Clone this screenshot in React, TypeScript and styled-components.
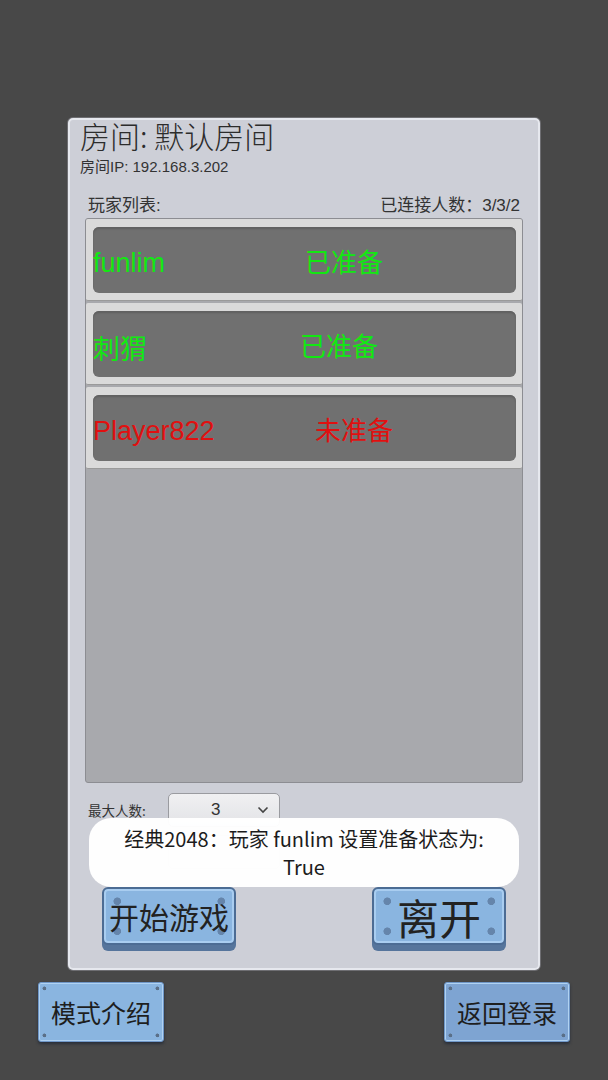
import React from "react";
import styled, { createGlobalStyle } from "styled-components";

const Global = createGlobalStyle`
  html, body { margin: 0; padding: 0; background: #484848; }
  body { font-family: "Noto Sans CJK SC", "Noto Sans", sans-serif; }
`;

const Page = styled.div`
  width: 608px;
  height: 1080px;
  background: #484848;
  display: flex;
  flex-direction: column;
  padding-top: 118px;
  box-sizing: border-box;
`;

const Panel = styled.div`
  position: relative;
  margin-left: 68px;
  width: 472px;
  height: 852px;
  box-sizing: border-box;
  background: #cdcfd7;
  border: 2px solid #e6e8ee;
  border-radius: 5px;
  box-shadow: 0 0 0 1px #6e6e72;
  padding: 0 0 0 10px;
  display: flex;
  flex-direction: column;
`;

const Title = styled.div`
  font-size: 30px;
  line-height: 36px;
  margin-top: -3px;
  color: #2c2c2c;
  font-weight: 300;
`;

const IpLine = styled.div`
  font-size: 15px;
  line-height: 18px;
  color: #333;
  margin-top: 5px;
  font-family: "Liberation Sans", "Noto Sans CJK SC", sans-serif;
`;

const HeaderRow = styled.div`
  display: flex;
  justify-content: space-between;
  width: 440px;
  margin-top: 19px;
  padding-left: 8px;
  box-sizing: border-box;
  font-size: 17px;
  line-height: 22px;
  color: #333;
  font-family: "Liberation Sans", "Noto Sans CJK SC", sans-serif;
`;

const List = styled.div`
  margin-top: 1px;
  margin-left: 5px;
  width: 438px;
  height: 565px;
  box-sizing: border-box;
  background: #a8a9ad;
  border: 1px solid #8c8d92;
  border-radius: 3px;
  display: flex;
  flex-direction: column;
  gap: 2px;
`;

const Row = styled.div`
  height: 82px;
  box-sizing: border-box;
  background: #dadada;
  border-bottom: 1px solid #9a9a9a;
  border-radius: 2px;
  padding: 8px 6px 7px 7px;
  display: flex;
`;

const RowInner = styled.div`
  flex: 1;
  background: #707070;
  border-radius: 6px;
  display: flex;
  align-items: center;
  font-size: 26px;
  box-shadow: inset 0 2px 2px #606060;
`;

const Name = styled.span<{ $ready: boolean }>`
  width: 200px;
  color: ${(p) => (p.$ready ? "#12e812" : "#e01010")};
  font-family: "Liberation Sans", "Noto Sans CJK SC", sans-serif;
  font-size: 27px;
  padding-top: 6px;
`;

const Status = styled.span<{ $ready: boolean; $shift: number }>`
  margin-left: ${(p) => p.$shift}px;
  color: ${(p) => (p.$ready ? "#12e812" : "#e01010")};
`;

const OptionRow = styled.div`
  display: flex;
  align-items: center;
  margin-top: 10px;
  height: 34px;
  padding-left: 8px;
`;

const OptionLabel = styled.span`
  width: 80px;
  font-size: 13.5px;
  color: #333;
`;

const Select = styled.div`
  width: 112px;
  height: 34px;
  box-sizing: border-box;
  border: 1px solid #9a9ba0;
  border-radius: 5px;
  background: linear-gradient(#f0f0f2, #e2e3e6);
  display: flex;
  align-items: center;
  font-size: 17px;
  color: #333;
  padding-left: 42px;
  padding-right: 10px;
  justify-content: space-between;
  font-family: "Liberation Sans", sans-serif;
`;

const HiddenRow = styled(OptionRow)`
  margin-top: 8px;
  opacity: 0.5;
`;

const ToastBox = styled.div`
  position: absolute;
  left: 19px;
  top: 698px;
  width: 430px;
  height: 69px;
  box-sizing: border-box;
  background: rgba(255, 255, 255, 0.97);
  border-radius: 22px;
  display: flex;
  flex-direction: column;
  align-items: center;
  justify-content: center;
  font-size: 20px;
  line-height: 28px;
  color: #1c1c1c;
`;

const ButtonRow = styled.div`
  display: flex;
  justify-content: space-between;
  width: 404px;
  margin-left: 22px;
  margin-top: 18px;
`;

const screws = (c: string, r: number, x: number, y: number) => {
  const g = `radial-gradient(circle, ${c} 0 ${r}px, transparent ${r + 0.6}px)`;
  const s = `${r * 3}px ${r * 3}px no-repeat`;
  return `
    ${g} left ${x}px top ${y}px / ${s},
    ${g} right ${x}px top ${y}px / ${s},
    ${g} left ${x}px bottom ${y}px / ${s},
    ${g} right ${x}px bottom ${y}px / ${s}`;
};

const Plate = styled.div<{ $w: number; $h: number; $size: number; $tone?: string }>`
  width: ${(p) => p.$w}px;
  height: ${(p) => p.$h}px;
  box-sizing: border-box;
  display: flex;
  align-items: center;
  justify-content: center;
  color: #222;
  font-size: ${(p) => p.$size}px;
  border-radius: 6px;
  border: 2px solid #4c6c94;
  background: ${screws("#6585ab", 3.5, 8, 7)}, ${(p) => p.$tone ?? "#8ab5e0"};
  box-shadow: inset 0 0 0 2px #a9cdf0, 0 6px 0 #56759c;
`;

const SmallPlate = styled.div<{ $tone?: string }>`
  width: 126px;
  height: 60px;
  box-sizing: border-box;
  display: flex;
  align-items: center;
  justify-content: center;
  color: #1e1e1e;
  font-size: 25px;
  border: 1px solid #6f97c8;
  border-radius: 3px;
  background: ${screws("#5a6f88", 1.6, 3, 3)}, ${(p) => p.$tone ?? "#8ab5e0"};
  box-shadow: inset 0 0 0 1px #b0d2f2, 0 2px 3px rgba(20, 30, 50, 0.6);
`;

const BottomRow = styled.div`
  display: flex;
  justify-content: space-between;
  padding: 0 38px;
  margin-top: 12px;
`;

const Chevron = () => (
  <svg width="12" height="8" viewBox="0 0 12 8">
    <path d="M1.5 1.5 L6 6 L10.5 1.5" stroke="#444" strokeWidth="1.6" fill="none" />
  </svg>
);

const players = [
  { name: "funlim", ready: true, shift: 12 },
  { name: "刺猬", ready: true, shift: 7 },
  { name: "Player822", ready: false, shift: 22 },
];

export default function App() {
  return (
    <>
      <Global />
      <Page>
        <Panel>
          <Title>房间: 默认房间</Title>
          <IpLine>房间IP: 192.168.3.202</IpLine>
          <HeaderRow>
            <span>玩家列表:</span>
            <span>已连接人数：3/3/2</span>
          </HeaderRow>
          <List>
            {players.map((p) => (
              <Row key={p.name}>
                <RowInner>
                  <Name $ready={p.ready}>{p.name}</Name>
                  <Status $ready={p.ready} $shift={p.shift}>
                    {p.ready ? "已准备" : "未准备"}
                  </Status>
                </RowInner>
              </Row>
            ))}
          </List>
          <OptionRow>
            <OptionLabel>最大人数:</OptionLabel>
            <Select>
              <span>3</span>
              <Chevron />
            </Select>
          </OptionRow>
          <HiddenRow>
            <OptionLabel />
            <Select />
          </HiddenRow>
          <ButtonRow>
            <Plate $w={134} $h={58} $size={30}>开始游戏</Plate>
            <Plate $w={134} $h={58} $size={42}>离开</Plate>
          </ButtonRow>
          <ToastBox>
            <div>经典2048：玩家 funlim 设置准备状态为:</div>
            <div>True</div>
          </ToastBox>
        </Panel>
        <BottomRow>
          <SmallPlate>模式介绍</SmallPlate>
          <SmallPlate $tone="#7ea4d2">返回登录</SmallPlate>
        </BottomRow>
      </Page>
    </>
  );
}
